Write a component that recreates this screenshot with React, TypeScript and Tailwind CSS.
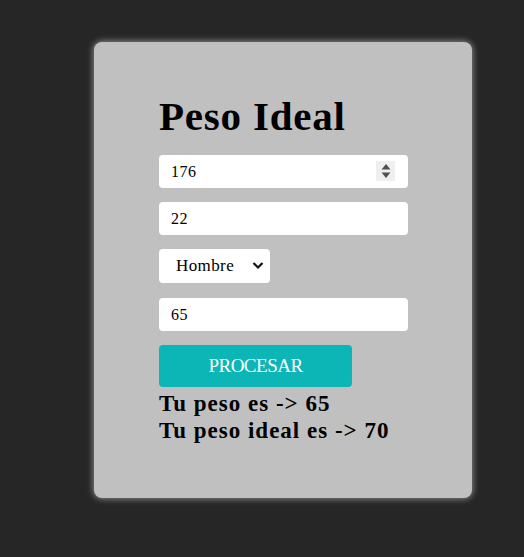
import React, { useState } from "react";

export default function App() {
  const [altura, setAltura] = useState("176");
  const [edad, setEdad] = useState("22");
  const [sexo, setSexo] = useState("Hombre");
  const [peso, setPeso] = useState("65");

  return (
    <main
      className="min-h-[557px] w-full bg-[#262626] pt-[42px] pl-[94px]"
      style={{ fontFamily: '"Liberation Serif", "DejaVu Serif", serif' }}
    >
      <div className="w-[378px] h-[456px] rounded-lg bg-[#c0c0c0] shadow-[0_0_6px_1px_rgba(255,255,255,0.45)] pl-[65px] pt-[54px]">
        <h1 className="text-[41px] font-bold leading-none tracking-[0.8px] text-black mb-[18px]">Peso Ideal</h1>

        <div className="relative w-[249px] mb-[14px]">
          <input
            type="text"
            value={altura}
            onChange={(e) => setAltura(e.target.value)}
            className="w-full h-[33px] rounded bg-white px-3 text-[16px] tracking-[0.5px] text-black outline-none"
          />
          <div className="absolute right-[13px] top-[6px] w-[19px] h-[20px] bg-[#efefef] flex items-center justify-center">
            <svg width="10" height="16" viewBox="0 0 10 16">
              <path d="M5 1 L9.5 6.5 H0.5 Z" fill="#505050" />
              <path d="M5 15 L9.5 9.5 H0.5 Z" fill="#505050" />
            </svg>
          </div>
        </div>

        <input
          type="text"
          value={edad}
          onChange={(e) => setEdad(e.target.value)}
          className="block w-[249px] h-[33px] rounded bg-white px-3 text-[16px] tracking-[0.5px] text-black outline-none mb-[14px]"
        />

        <div className="relative w-[111px] mb-[15px]">
          <select
            value={sexo}
            onChange={(e) => setSexo(e.target.value)}
            className="appearance-none w-full h-[34px] rounded bg-white pl-[17px] text-[17px] tracking-[0.4px] text-black outline-none"
          >
            <option>Hombre</option>
            <option>Mujer</option>
          </select>
          <svg
            className="absolute right-[6px] top-[12px] pointer-events-none"
            width="12"
            height="9"
            viewBox="0 0 12 9"
          >
            <path d="M1.5 2 L6 6.5 L10.5 2" stroke="#111" strokeWidth="2.2" fill="none" />
          </svg>
        </div>

        <input
          type="text"
          value={peso}
          onChange={(e) => setPeso(e.target.value)}
          className="block w-[249px] h-[33px] rounded bg-white px-3 text-[16px] tracking-[0.5px] text-black outline-none mb-[14px]"
        />

        <button className="w-[193px] h-[42px] rounded-sm bg-[#0cb6b6] text-white text-[19px] tracking-[-0.5px]">
          PROCESAR
        </button>

        <div className="text-[23px] font-bold leading-[27px] tracking-[1px] text-black mt-[3px]">
          <p>Tu peso es -&gt; 65</p>
          <p>Tu peso ideal es -&gt; 70</p>
        </div>
      </div>
    </main>
  );
}
